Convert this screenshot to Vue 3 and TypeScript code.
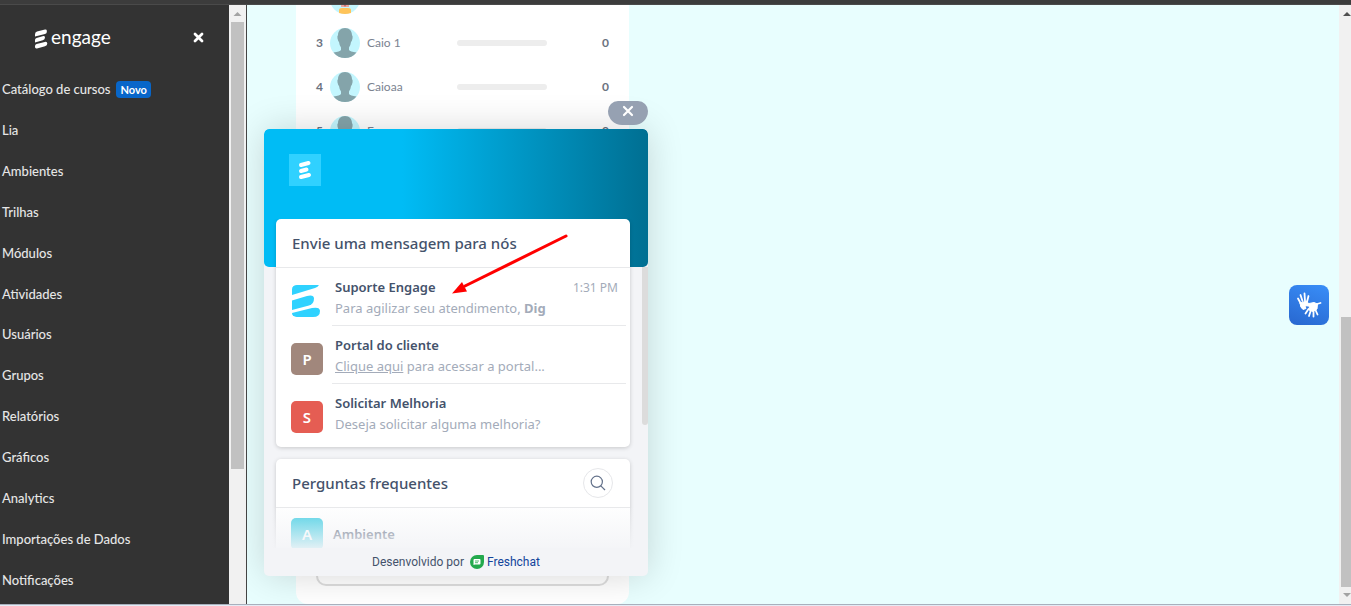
<script setup lang="ts">
interface NavItem { label: string; badge?: string }
interface Ranked { place: number; name: string; score: number }
interface Channel { name: string; initial?: string; tone?: string; link?: string; text: string; strong?: string; time?: string }

const nav: NavItem[] = [
  { label: 'Catálogo de cursos', badge: 'Novo' },
  { label: 'Lia' },
  { label: 'Ambientes' },
  { label: 'Trilhas' },
  { label: 'Módulos' },
  { label: 'Atividades' },
  { label: 'Usuários' },
  { label: 'Grupos' },
  { label: 'Relatórios' },
  { label: 'Gráficos' },
  { label: 'Analytics' },
  { label: 'Importações de Dados' },
  { label: 'Notificações' },
]

const ranking: Ranked[] = [
  { place: 3, name: 'Caio 1', score: 0 },
  { place: 4, name: 'Caioaa', score: 0 },
  { place: 5, name: 'E', score: 0 },
]

const channels: Channel[] = [
  { name: 'Suporte Engage', text: 'Para agilizar seu atendimento, ', strong: 'Dig', time: '1:31 PM' },
  { name: 'Portal do cliente', initial: 'P', tone: 'brown', link: 'Clique aqui', text: ' para acessar a portal...' },
  { name: 'Solicitar Melhoria', initial: 'S', tone: 'red', text: 'Deseja solicitar alguma melhoria?' },
]
</script>

<template>
  <div class="page">
    <div class="topline"></div>
    <div class="main">
      <aside class="sidebar">
        <header class="brand">
          <a href="#" class="logo">
            <svg width="14" height="20" viewBox="0 0 14 20" fill="#fff" aria-hidden="true">
              <path d="M1 5.200Q1 3.200 3 2.600L11 .6Q12.800 .4 12.800 1.800V3Q12.800 4.400 11 4.900L1 7.600Z" />
              <path d="M1 11Q1 9.300 2.600 8.900L8.600 7.200Q11 6.800 11 8.400 11 10.600 8.800 11.300L1 13.400Z" />
              <path d="M1 17.200Q1 15.400 2.600 15L10.800 12.900Q13.300 12.500 13.300 14.400 13.300 16.600 11 17.200L3 19.400Q1 19.800 1 18Z" />
            </svg>
            <span>engage</span>
          </a>
          <button class="collapse" type="button" aria-label="Fechar menu">
            <svg width="11" height="11" viewBox="0 0 11 11"><path d="M2 2L9 9M9 2L2 9" stroke="#fff" stroke-width="2.800" stroke-linecap="round" /></svg>
          </button>
        </header>
        <nav class="nav">
          <a v-for="item in nav" :key="item.label" href="#">{{ item.label }}<span v-if="item.badge" class="badge">{{ item.badge }}</span></a>
        </nav>
      </aside>
      <div class="track side-track">
        <svg class="arrow-cap" width="17" height="17" viewBox="0 0 17 17"><path d="M4.500 11L8.500 7L12.500 11Z" fill="#a3a3a3" /></svg>
        <div class="thumb side-thumb"></div>
      </div>
      <main class="content">
        <section class="ranking">
          <ol>
            <li class="row">
              <span class="place"></span>
              <svg class="avatar" viewBox="0 0 30 30"><circle cx="15" cy="15" r="15" fill="#c3f6fe" /><path d="M11 17H19V23H11Z" fill="#eaa6a0" /><path d="M13 20H17L15 23Z" fill="#c96b6b" /><path d="M9 29V26Q9 24 12 24H18Q21 24 21 26V29Q15 31 9 29Z" fill="#ffc45a" /></svg>
            </li>
            <li v-for="r in ranking" :key="r.place" class="row">
              <span class="place">{{ r.place }}</span>
              <svg class="avatar" viewBox="0 0 30 30"><circle cx="15" cy="15" r="15" fill="#c3f6fe" /><path d="M15 0C10.500 0 8.200 3 8 7Q7 8 7.500 10.500T9 14Q9.500 18 11 19.500V22Q10 23.500 3.500 24.500Q8 30 15 30T26.500 24.500Q20 23.500 19 22V19.500Q20.500 18 21 14Q22 13 22.500 10.500T22 7C21.800 3 19.500 0 15 0Z" fill="#84a4aa" /></svg>
              <span class="name">{{ r.name }}</span>
              <span class="bar"></span>
              <span class="score">{{ r.score }}</span>
            </li>
          </ol>
          <div class="outline"></div>
        </section>

        <button class="dismiss" type="button" aria-label="Fechar conversa">
          <svg width="12" height="12" viewBox="0 0 12 12"><path d="M2 2L10 10M10 2L2 10" stroke="#fff" stroke-width="2.200" stroke-linecap="round" /></svg>
        </button>

        <section class="widget">
          <header class="hero">
            <div class="hero-logo">
              <svg width="14" height="20" viewBox="0 0 14 20" fill="none" stroke="#fff" stroke-width="4" stroke-linecap="round"><path d="M3 5L10.500 3M3 11L8.500 9.500M3 17L11 15" /></svg>
            </div>
          </header>
          <div class="body">
            <section class="card">
              <h2>Envie uma mensagem para nós</h2>
              <ul>
                <li v-for="c in channels" :key="c.name" class="channel">
                  <span v-if="c.initial" class="tile" :class="c.tone">{{ c.initial }}</span>
                  <svg v-else class="tile" viewBox="0 0 32 32" fill="#2fd2ff"><path d="M1 4.500Q1 0 6 0H28Q27 2 24 3L1 10Z" /><path d="M1 15.500L16 11Q23 9.500 23 13.500Q23 19 18 20.500L1 25Z" /><path d="M1 28L21 23Q29 21.500 29 26Q29 32 22 32H6Q1 32 1 28Z" /></svg>
                  <div class="text">
                    <p class="title">{{ c.name }}<time v-if="c.time">{{ c.time }}</time></p>
                    <p class="preview"><a v-if="c.link" href="#">{{ c.link }}</a>{{ c.text }}<b v-if="c.strong">{{ c.strong }}</b></p>
                  </div>
                </li>
              </ul>
            </section>
            <section class="card faq">
              <div class="faq-head">
                <h2>Perguntas frequentes</h2>
                <button class="search" type="button" aria-label="Pesquisar">
                  <svg width="16" height="16" viewBox="0 0 16 16" fill="none" stroke="#63718a" stroke-width="1.200"><circle cx="6.800" cy="6.800" r="5.600" /><path d="M10.800 10.800L15 15" /></svg>
                </button>
              </div>
              <div class="faq-item"><span class="tile cyan">A</span><span class="faq-name">Ambiente</span></div>
            </section>
            <div class="fade"></div>
            <div class="body-thumb"></div>
          </div>
          <footer class="powered">
            <span>Desenvolvido por</span>
            <svg width="14" height="14" viewBox="0 0 14 14"><path d="M7 0H13Q14 0 14 1V7A7 7 0 1 1 7 0Z" fill="#23a94d" /><path d="M4.500 4H9.500Q10.500 4 10.500 5V8.500Q10.500 9.500 9.500 9.500H5L3.500 10V5Q3.500 4 4.500 4Z" fill="#fff" /><path d="M5 6H9M5 7.700H8" stroke="#23a94d" stroke-width=".8" /></svg>
            <a href="#">Freshchat</a>
          </footer>
        </section>

        <svg class="pointer" width="120" height="64" viewBox="0 0 120 64" aria-hidden="true"><path d="M115 5L14 55" stroke="#f00" stroke-width="3" stroke-linecap="round" /><path d="M1 62.500L11 51L16 60.500Z" fill="#f00" /></svg>

        <button class="libras" type="button" aria-label="Acessibilidade em Libras">
          <svg width="26" height="26" viewBox="0 0 26 26" fill="none" stroke="#fff" stroke-linecap="round" stroke-linejoin="round">
            <path d="M4.500 11L2 6.500M6.500 9L4.500 3M9 9L8.500 1.500M11 10L12.500 4" stroke-width="1.800" />
            <path d="M4 11L11 9L12.500 12L9 14L10 16.500L7 17.500Q4 15.500 4 11Z" fill="#fff" />
            <path d="M12.500 17L9.500 21.500M15 18L13 24M17.500 19L17.500 24.500M19.500 18L21.500 22.500M21 12L24.500 11" stroke-width="1.800" />
            <path d="M9.500 13.500L13 11.500L18 10.500L21.500 12L21 17L17 19.500L13 18L13.500 14.500Z" fill="#fff" />
          </svg>
        </button>
      </main>
      <div class="track page-track">
        <svg class="arrow-cap" width="12" height="17" viewBox="0 0 12 17"><path d="M4 11L8 7L12 11Z" fill="#505050" /></svg>
        <div class="thumb page-thumb"></div>
        <svg class="arrow-cap" width="12" height="17" viewBox="0 0 12 17"><path d="M4 6L8 10L12 6Z" fill="#a3a3a3" /></svg>
      </div>
    </div>
    <div class="bottomline"></div>
  </div>
</template>

<style>
body { margin: 0; }
</style>

<style scoped>
* { box-sizing: border-box; }
h2, p, ol, ul { margin: 0; padding: 0; }
ol, ul { list-style: none; }
button { border: 0; padding: 0; display: flex; align-items: center; justify-content: center; }
svg { display: block; flex: none; }
a { text-decoration: none; }

.page { height: 100vh; display: flex; flex-direction: column; overflow: hidden; font-family: "Noto Sans", "Open Sans", sans-serif; }
.topline { height: 5px; flex: none; background: #3c3c3c; border-bottom: 1px solid #4a4a4a; }
.bottomline { height: 2px; flex: none; background: #e4ebf5; border-top: 1px solid #a8b0bd; }
.main { flex: 1; min-height: 0; display: flex; }

.sidebar { width: 229px; flex: none; background: #333; display: flex; flex-direction: column; font-family: Lato, sans-serif; }
.brand { height: 64px; flex: none; display: flex; align-items: center; justify-content: space-between; padding: 0 25px 0 34px; }
.logo { display: flex; align-items: center; gap: 3px; color: #fff; font-size: 19px; line-height: 24px; }
.logo svg { margin-top: 4px; }
.collapse { background: none; width: 11px; height: 11px; }
.nav { flex: 1; display: grid; grid-auto-rows: 1fr; padding: 0 2px 4px; }
.nav a { display: flex; align-items: center; color: #e6e6e6; font-size: 13px; font-weight: 500; }
.badge { margin-left: 6px; padding: 0 4px; border-radius: 4px; background: #0866c9; color: #fff; font-size: 11px; font-weight: 700; line-height: 17px; }

.track { flex: none; background: #f1f1f1; display: flex; flex-direction: column; }
.thumb { background: #c1c1c1; }
.side-track { width: 18px; border-right: 1px solid #444; }
.side-thumb { height: 447px; margin: 0 2px; }
.page-track { width: 12px; }
.page-thumb { height: 270px; margin: auto 0 0 2px; }

.content { position: relative; flex: 1; min-width: 0; background: #e8fefe; padding: 0 49px; overflow: hidden; }
.ranking { width: 333px; height: 100%; background: #fff; border-radius: 0 0 12px 12px; display: flex; flex-direction: column; overflow: hidden; padding: 0 20px 18px; font-family: Lato, sans-serif; color: #6b7280; font-size: 12px; }
.ranking ol { margin-top: -28px; }
.row { height: 44px; display: flex; align-items: center; }
.row span { padding-bottom: 2px; }
.place { width: 14px; font-weight: 700; }
.avatar { width: 30px; height: 30px; }
.name { width: 90px; margin-left: 7px; color: #7b8391; }
.bar { width: 90px; height: 6px; border-radius: 3px; background: #ededed; }
.score { margin-left: auto; font-weight: 700; }
.outline { flex: 1; border: 2px solid #dedede; border-top: 0; border-radius: 0 0 10px 10px; }

.dismiss { position: absolute; left: 361px; top: 96px; width: 40px; height: 24px; background: #96a1b2; border-radius: 10px 10px 14px 14px; padding-bottom: 4px; z-index: 1; }
.widget { position: absolute; left: 17px; top: 124px; width: 384px; height: 447px; display: flex; flex-direction: column; overflow: hidden; border-radius: 5px; background: #f3f4f7; box-shadow: 0 0 36px rgba(0, 0, 0, .16); }
.hero { height: 138px; flex: none; border-radius: 5px; background: linear-gradient(to right, #00bcf5 36%, #006f92); padding: 25px; }
.hero-logo { width: 32px; height: 32px; background: #30d1ff; display: grid; place-items: center; }
.body { position: relative; flex: 1; min-height: 0; margin-top: -48px; padding: 0 18px 0 12px; display: flex; flex-direction: column; gap: 12px; overflow: hidden; }
.card { flex: none; background: #fff; border-radius: 5px; box-shadow: 0 1px 4px rgba(0, 0, 0, .18); }
.card h2 { height: 49px; padding: 0 16px; border-bottom: 1px solid #e8e9eb; color: #44526b; font-size: 15px; font-weight: 500; line-height: 48px; }
.card ul { padding-bottom: 5px; }
.channel { height: 58px; display: flex; align-items: center; padding: 8px 4px 0 15px; }
.tile { width: 32px; height: 32px; flex: none; border-radius: 5px; color: #fff; font-size: 15px; font-weight: 600; line-height: 32px; text-align: center; }
.brown { background: #a1877c; }
.red { background: #e55d53; }
.cyan { background: #3ccde3; }
.text { flex: 1; height: 50px; margin-left: 9px; padding-left: 3px; border-bottom: 1px solid #e8e9eb; }
.channel:last-child .text { border-color: transparent; }
.title { display: flex; justify-content: space-between; height: 22px; padding-right: 8px; color: #44526b; font-size: 13px; font-weight: 600; line-height: 22px; }
.title time { color: #a3abb9; font-size: 12px; font-weight: 400; line-height: 24px; }
.preview { color: #a3abb9; font-size: 13px; line-height: 20px; white-space: nowrap; }
.preview a { color: inherit; text-decoration: underline; }
.faq-head { position: relative; }
.search { position: absolute; right: 17px; top: 9px; width: 30px; height: 30px; border: 1px solid #e6e7ea; border-radius: 50%; background: #fff; }
.faq-item { display: flex; align-items: center; gap: 10px; height: 52px; padding: 0 15px; }
.faq-name { color: #44526b; font-size: 13px; font-weight: 600; }
.fade { position: absolute; left: 0; right: 0; bottom: 0; height: 40px; background: linear-gradient(rgba(243, 244, 247, .1), rgba(243, 244, 247, .9)); }
.body-thumb { position: absolute; right: 0; top: 48px; width: 6px; height: 158px; border-radius: 0 0 3px 3px; background: #dcdcdc; }
.powered { height: 28px; flex: none; display: flex; align-items: center; justify-content: center; color: #44526b; font-family: Roboto, sans-serif; font-size: 12px; }
.powered svg { margin: 0 3px 0 6px; }
.powered a { color: #12449b; }

.pointer { position: absolute; left: 204px; top: 226px; }
.libras { position: absolute; right: 10px; top: 280px; width: 40px; height: 40px; border-radius: 8px; background: linear-gradient(20deg, #2867cf, #398ef8); }
</style>
